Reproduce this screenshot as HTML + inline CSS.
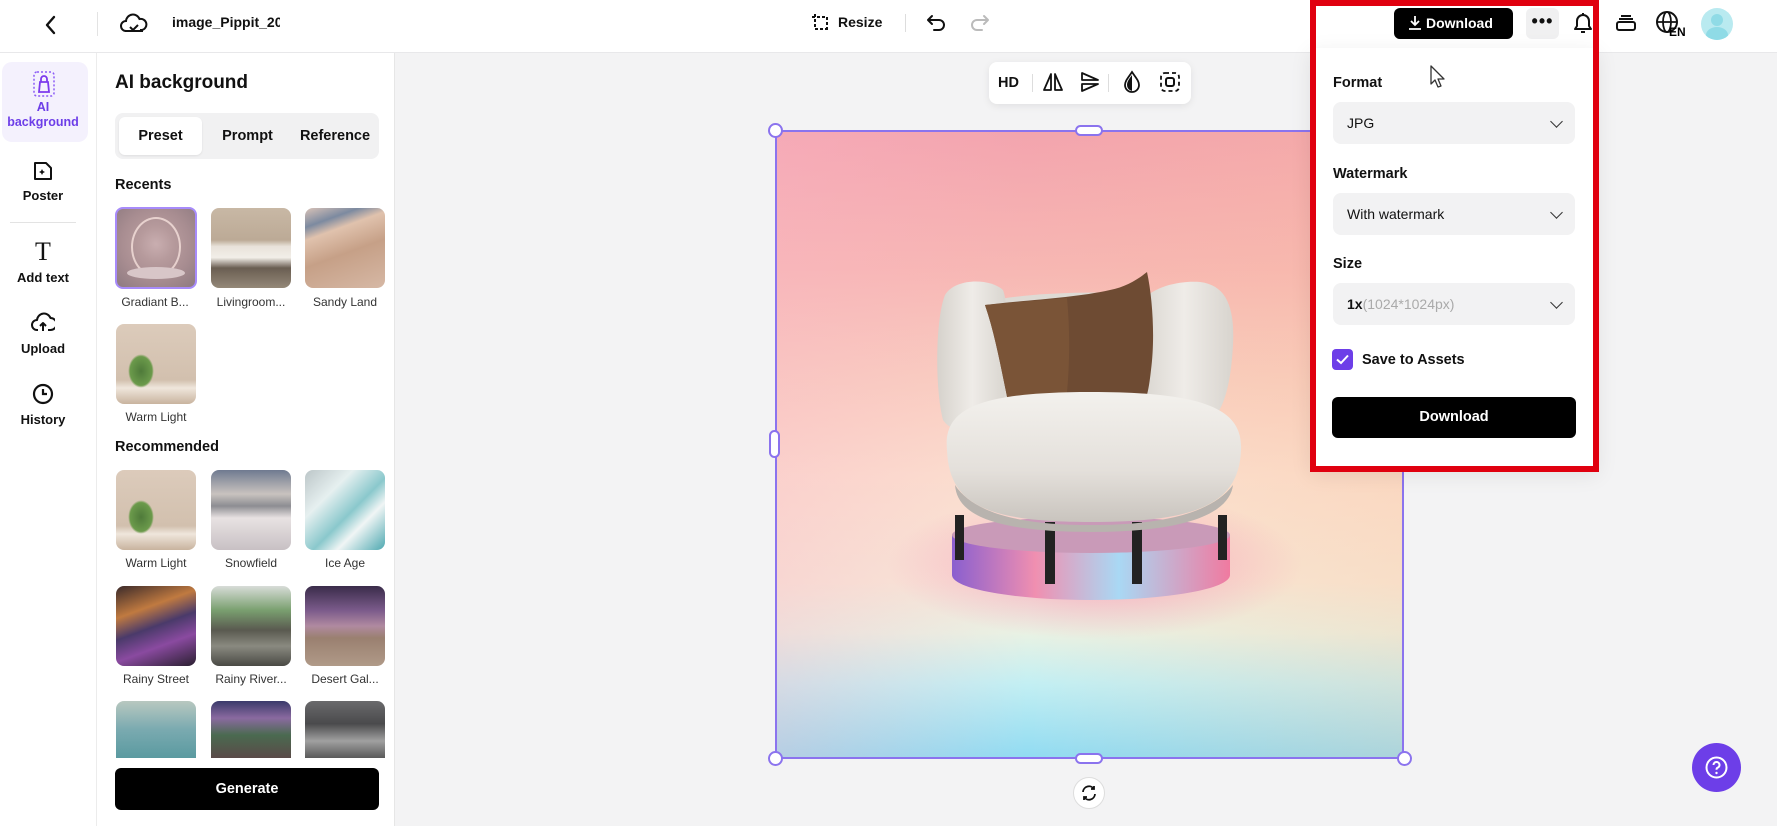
<!DOCTYPE html>
<html><head><meta charset="utf-8"><style>
*{box-sizing:border-box;margin:0;padding:0}
body{width:1777px;height:826px;overflow:hidden;background:#f3f3f4;font-family:"Liberation Sans",sans-serif;color:#111;position:relative}
.abs{position:absolute}
.top{left:0;top:0;width:1777px;height:53px;background:#fff;border-bottom:1px solid #e8e8ea}
.rail{left:0;top:53px;width:97px;height:773px;background:#fff;border-right:1px solid #ececec}
.panel{left:97px;top:53px;width:298px;height:773px;background:#fff;border-right:1px solid #e6e6e6}
.b{font-weight:bold}
.lbl{font-size:13px;font-weight:bold;text-align:center;width:97px;left:0}
.th{width:80px;height:80px;border-radius:8px;overflow:hidden}
.cap{font-size:12px;color:#333;width:96px;text-align:center}
.sel{left:1333px;width:242px;height:42px;background:#f2f2f3;border-radius:8px;font-size:14px;padding:0 14px;line-height:42px}
.chev{position:absolute;right:14px;top:15px;width:9px;height:9px;border-right:1.6px solid #333;border-bottom:1.6px solid #333;transform:rotate(45deg)}
.dl{font-size:14.5px;font-weight:bold}
</style></head><body>
<div class="abs top"></div>
<svg class="abs" style="left:40px;top:12px" width="22" height="26" viewBox="0 0 22 26"><path d="M14 5 L7 13 L14 21" fill="none" stroke="#111" stroke-width="2.4" stroke-linecap="round" stroke-linejoin="round"/></svg>
<div class="abs" style="left:97px;top:12px;width:1px;height:24px;background:#e3e3e3"></div>
<svg class="abs" style="left:120px;top:11px" width="28" height="26" viewBox="0 0 28 26"><path d="M8 20 H6 a5 5 0 0 1 0-10 a7 7 0 0 1 13.5-2 a5.5 5.5 0 0 1 2.5 11 H20" fill="none" stroke="#111" stroke-width="2"/><path d="M10 16 l3 3 l5-5" fill="none" stroke="#111" stroke-width="2"/><path d="M5 20 H23" stroke="#111" stroke-width="2"/></svg>
<div class="abs b" style="left:172px;top:14px;font-size:14px;width:108px;overflow:hidden;white-space:nowrap">image_Pippit_2025</div>
<svg class="abs" style="left:811px;top:13px" width="20" height="20" viewBox="0 0 20 20"><path d="M4 1 V16 H19 M1 4 H16 V19" fill="none" stroke="#111" stroke-width="2" stroke-dasharray="3 2"/></svg>
<div class="abs b" style="left:838px;top:14px;font-size:14px">Resize</div>
<div class="abs" style="left:905px;top:14px;width:1px;height:18px;background:#ddd"></div>
<svg class="abs" style="left:926px;top:12px" width="22" height="22" viewBox="0 0 22 22"><path d="M6 4 L2 8 L6 12 M2 8 H13 a5 5 0 0 1 0 10 H8" fill="none" stroke="#111" stroke-width="2" stroke-linecap="round" stroke-linejoin="round"/></svg>
<svg class="abs" style="left:968px;top:12px" width="22" height="22" viewBox="0 0 22 22"><path d="M16 4 L20 8 L16 12 M20 8 H9 a5 5 0 0 0 0 10 H14" fill="none" stroke="#bbb" stroke-width="2" stroke-linecap="round" stroke-linejoin="round"/></svg>
<div class="abs" style="left:1394px;top:8px;width:119px;height:31px;background:#000;border-radius:6px;color:#fff;font-size:14px;font-weight:bold;line-height:31px;padding-left:32px">Download</div>
<svg class="abs" style="left:1408px;top:15px" width="14" height="16" viewBox="0 0 14 16"><path d="M7 1 V10 M3 6 L7 10 L11 6 M1 14 H13" fill="none" stroke="#fff" stroke-width="1.8"/></svg>
<div class="abs" style="left:1526px;top:8px;width:33px;height:31px;background:#f0f0f1;border-radius:6px;text-align:center;font-size:18px;font-weight:bold;line-height:26px;letter-spacing:1px">•••</div>
<svg class="abs" style="left:1571px;top:10px" width="24" height="26" viewBox="0 0 24 26"><path d="M4 19 H20 L18 16 V11 a6 6 0 0 0-12 0 V16 Z M10 22 h4" fill="none" stroke="#111" stroke-width="2" stroke-linejoin="round"/><path d="M12 3 v2" stroke="#111" stroke-width="2"/></svg>
<svg class="abs" style="left:1614px;top:12px" width="24" height="22" viewBox="0 0 24 22"><rect x="3" y="10" width="18" height="8" rx="2" fill="none" stroke="#111" stroke-width="2"/><path d="M5 7 H19 M7 4 H17" stroke="#111" stroke-width="2"/></svg>
<svg class="abs" style="left:1655px;top:10px" width="32" height="28" viewBox="0 0 32 28"><circle cx="12" cy="12" r="10" fill="none" stroke="#111" stroke-width="2"/><ellipse cx="12" cy="12" rx="4" ry="10" fill="none" stroke="#111" stroke-width="1.8"/><path d="M2 12 H22" stroke="#111" stroke-width="1.8"/><text x="14" y="26" font-size="12" font-weight="bold" font-family="Liberation Sans">EN</text></svg>
<div class="abs" style="left:1701px;top:8px;width:32px;height:32px;border-radius:50%;background:#b9eaf0;overflow:hidden"><div style="position:absolute;left:10px;top:6px;width:12px;height:12px;border-radius:50%;background:#8fdbe6"></div><div style="position:absolute;left:5px;top:19px;width:22px;height:16px;border-radius:50%;background:#8fdbe6"></div></div>

<div class="abs rail"></div>
<div class="abs" style="left:2px;top:62px;width:86px;height:80px;background:#f4f1fd;border-radius:10px"></div>
<svg class="abs" style="left:32px;top:70px" width="24" height="28" viewBox="0 0 24 28"><rect x="2" y="2" width="20" height="24" rx="3" fill="none" stroke="#8b5cf6" stroke-width="1.5" stroke-dasharray="2 2"/><path d="M7 22 L8 12 H16 L17 22 Z M9 12 V9 a3 3 0 0 1 6 0 V12" fill="none" stroke="#7c3aed" stroke-width="1.8"/></svg>
<div class="abs lbl" style="top:100px;color:#6d3ee8;font-size:12.5px;line-height:15px;width:86px">AI<br>background</div>
<svg class="abs" style="left:32px;top:160px" width="22" height="22" viewBox="0 0 22 22"><path d="M3 3 H14 L19 8 V19 H3 Z" fill="none" stroke="#111" stroke-width="2" stroke-linejoin="round"/><path d="M10 9 l1 2 l2 1 l-2 1 l-1 2 l-1-2 l-2-1 l2-1 Z" fill="#111"/></svg>
<div class="abs lbl" style="top:188px;width:86px">Poster</div>
<div class="abs" style="left:10px;top:222px;width:66px;height:1px;background:#e3e3e3"></div>
<div class="abs" style="left:0;width:86px;top:237px;text-align:center;font-family:'Liberation Serif',serif;font-size:26px">T</div>
<div class="abs lbl" style="top:270px;width:86px">Add text</div>
<svg class="abs" style="left:31px;top:312px" width="24" height="22" viewBox="0 0 24 22"><path d="M7 18 H6 a5 5 0 0 1 0-10 a7 7 0 0 1 13.5-2 a5.5 5.5 0 0 1 0 12 H17 M12 19 V11 M9 14 L12 11 L15 14" fill="none" stroke="#111" stroke-width="2" stroke-linejoin="round"/></svg>
<div class="abs lbl" style="top:341px;width:86px">Upload</div>
<svg class="abs" style="left:32px;top:383px" width="22" height="22" viewBox="0 0 22 22"><circle cx="11" cy="11" r="9" fill="none" stroke="#111" stroke-width="2.2"/><path d="M11 6 V11 H15" fill="none" stroke="#111" stroke-width="2.2"/></svg>
<div class="abs lbl" style="top:412px;width:86px">History</div>

<div class="abs panel"></div>
<div class="abs b" style="left:115px;top:72px;font-size:19px">AI background</div>
<div class="abs" style="left:115px;top:113px;width:264px;height:46px;background:#f1f1f2;border-radius:8px"></div>
<div class="abs" style="left:119px;top:117px;width:83px;height:38px;background:#fff;border-radius:6px;box-shadow:0 1px 2px rgba(0,0,0,.08)"></div>
<div class="abs b" style="left:119px;top:128px;width:83px;text-align:center;font-size:14.5px">Preset</div>
<div class="abs b" style="left:206px;top:128px;width:83px;text-align:center;font-size:14.5px">Prompt</div>
<div class="abs b" style="left:292px;top:128px;width:86px;text-align:center;font-size:14.5px">Reference</div>
<div class="abs b" style="left:115px;top:177px;font-size:14.5px">Recents</div>

<div class="abs th" style="left:115px;top:207px;width:82px;height:82px;border:2px solid #a78bfa;background:radial-gradient(circle at 50% 45%,#c9aeb0 0,#b69a9c 30%,#a88d91 60%,#8e7a80 100%)"><div style="position:absolute;left:14px;top:8px;width:50px;height:60px;border:2px solid rgba(255,235,230,.7);border-radius:50%"></div><div style="position:absolute;left:10px;top:58px;width:58px;height:12px;background:#d8c6c8;border-radius:50%"></div></div>
<div class="abs th" style="left:211px;top:208px;background:linear-gradient(#c8b8a5 0,#bcaa96 40%,#e8e2da 48%,#f2eee8 62%,#6a5e52 75%,#948878 100%)"></div>
<div class="abs th" style="left:305px;top:208px;background:linear-gradient(160deg,#d9c3b8 0,#7c8aa0 18%,#e0c2ad 30%,#c6a087 55%,#d6b8a5 100%)"></div>
<div class="abs cap" style="left:107px;top:295px">Gradiant B...</div>
<div class="abs cap" style="left:203px;top:295px">Livingroom...</div>
<div class="abs cap" style="left:297px;top:295px">Sandy Land</div>
<div class="abs th" style="left:116px;top:324px;background:linear-gradient(#dccbbb 0,#d2c0ae 70%,#efe6dc 80%,#c8b39e 100%)"><div style="position:absolute;left:12px;top:30px;width:26px;height:34px;background:radial-gradient(#4f7a3a,#6b9a4b 60%,transparent 70%)"></div></div>
<div class="abs cap" style="left:108px;top:410px">Warm Light</div>

<div class="abs b" style="left:115px;top:439px;font-size:14.5px">Recommended</div>
<div class="abs th" style="left:116px;top:470px;background:linear-gradient(#dccbbb 0,#d2c0ae 70%,#efe6dc 80%,#c8b39e 100%)"><div style="position:absolute;left:12px;top:30px;width:26px;height:34px;background:radial-gradient(#4f7a3a,#6b9a4b 60%,transparent 70%)"></div></div>
<div class="abs th" style="left:211px;top:470px;background:linear-gradient(#6f7a90 0,#c9c3bf 30%,#8d8d92 45%,#e8e2e2 60%,#c8c0c4 100%)"></div>
<div class="abs th" style="left:305px;top:470px;background:linear-gradient(135deg,#bcc6c8 0,#e6f0f0 30%,#8ac8cc 55%,#f0f5f5 70%,#4da8b0 100%)"></div>
<div class="abs cap" style="left:108px;top:556px">Warm Light</div>
<div class="abs cap" style="left:203px;top:556px">Snowfield</div>
<div class="abs cap" style="left:297px;top:556px">Ice Age</div>
<div class="abs th" style="left:116px;top:586px;background:linear-gradient(160deg,#3a2a2a 0,#c07a40 30%,#4a3a6a 50%,#8a4aa0 70%,#2a2030 100%)"></div>
<div class="abs th" style="left:211px;top:586px;background:linear-gradient(#d8dcd8 0,#7aa070 30%,#5a5a50 55%,#8a8a80 75%,#4a4a44 100%)"></div>
<div class="abs th" style="left:305px;top:586px;background:linear-gradient(#3a2c4a 0,#7a5a8a 30%,#b08aa0 50%,#9a8070 65%,#b09a88 100%)"></div>
<div class="abs cap" style="left:108px;top:672px">Rainy Street</div>
<div class="abs cap" style="left:203px;top:672px">Rainy River...</div>
<div class="abs cap" style="left:297px;top:672px">Desert Gal...</div>
<div class="abs th" style="left:116px;top:701px;height:57px;border-radius:8px 8px 0 0;background:linear-gradient(#b8c8c0 0,#7aaab0 50%,#5a9aa0 100%)"></div>
<div class="abs th" style="left:211px;top:701px;height:57px;border-radius:8px 8px 0 0;background:linear-gradient(#3a3a6a 0,#8a6aa0 30%,#4a6a50 60%,#5a4a48 100%)"></div>
<div class="abs th" style="left:305px;top:701px;height:57px;border-radius:8px 8px 0 0;background:linear-gradient(#6a6a6c 0,#4a4a4c 40%,#a0a0a0 70%,#5a5a5a 100%)"></div>
<div class="abs" style="left:115px;top:768px;width:264px;height:42px;background:#000;border-radius:6px;color:#fff;text-align:center;line-height:42px;font-size:14.5px;font-weight:bold">Generate</div>

<div class="abs" style="left:989px;top:62px;width:202px;height:42px;background:#fff;border-radius:8px;box-shadow:0 2px 8px rgba(0,0,0,.08)"></div>
<div class="abs b" style="left:998px;top:75px;font-size:14.5px">HD</div>
<div class="abs" style="left:1032px;top:74px;width:1px;height:18px;background:#ddd"></div>
<svg class="abs" style="left:1041px;top:71px" width="24" height="22" viewBox="0 0 24 22"><path d="M10 3 L3 19 H10 Z M14 3 L21 19 H14 Z" fill="none" stroke="#111" stroke-width="1.8" stroke-linejoin="round"/></svg>
<svg class="abs" style="left:1079px;top:71px" width="22" height="22" viewBox="0 0 22 22"><path d="M3 2 L19 9 H3 Z M3 13 H19 L3 20 Z" fill="none" stroke="#111" stroke-width="1.8" stroke-linejoin="round"/></svg>
<div class="abs" style="left:1108px;top:74px;width:1px;height:18px;background:#ddd"></div>
<svg class="abs" style="left:1121px;top:70px" width="22" height="24" viewBox="0 0 22 24"><path d="M11 2 C7 8 4 11 4 15 a7 7 0 0 0 14 0 C18 11 15 8 11 2 Z" fill="none" stroke="#111" stroke-width="1.8"/><path d="M11 5 V21 a6 6 0 0 1-5-6 C6 11 9 8 11 5Z" fill="#111"/></svg>
<svg class="abs" style="left:1159px;top:71px" width="22" height="22" viewBox="0 0 22 22"><rect x="2" y="2" width="18" height="18" rx="4" fill="none" stroke="#111" stroke-width="1.8" stroke-dasharray="4 3"/><rect x="7" y="7" width="8" height="8" rx="2" fill="none" stroke="#111" stroke-width="2"/></svg>

<div class="abs" style="left:775px;top:130px;width:629px;height:629px;overflow:hidden;background:linear-gradient(180deg,#f3a4ae 0%,#f7b7b3 22%,#f9cfc0 40%,#fbe0cf 55%,#f7e9d8 72%,#e9f2e4 80%,#c3eff3 88%,#90dbf2 100%)">
 <div style="position:absolute;inset:0;background:linear-gradient(90deg,rgba(250,180,200,.35),rgba(255,255,255,0) 40%,rgba(250,190,150,.25))"></div>
 <div style="position:absolute;left:110px;top:360px;width:420px;height:150px;border-radius:50%;background:radial-gradient(ellipse,rgba(245,110,170,.55),rgba(245,140,190,0) 70%)"></div>
 <svg style="position:absolute;left:0;top:0" width="629" height="629" viewBox="0 0 629 629">
  <defs>
   <linearGradient id="ped" x1="0" x2="1"><stop offset="0" stop-color="#8a5fcf"/><stop offset=".3" stop-color="#f08fb0"/><stop offset=".6" stop-color="#a9d8f4"/><stop offset="1" stop-color="#f07aa0"/></linearGradient>
   <linearGradient id="seat" x1="0" y1="0" x2="0" y2="1"><stop offset="0" stop-color="#f3f1ed"/><stop offset=".6" stop-color="#e4e0db"/><stop offset="1" stop-color="#c9c4be"/></linearGradient>
   <linearGradient id="arm" x1="0" y1="0" x2="1" y2="0"><stop offset="0" stop-color="#d6d2cc"/><stop offset=".5" stop-color="#efece8"/><stop offset="1" stop-color="#d8d4ce"/></linearGradient>
  </defs>
  <path d="M177 405 V445 a139 25 0 0 0 278 0 V405 Z" fill="url(#ped)"/>
  <ellipse cx="316" cy="405" rx="139" ry="18" fill="#c99ab8"/>
  <rect x="180" y="385" width="9" height="45" fill="#222"/><rect x="443" y="385" width="9" height="45" fill="#222"/>
  <rect x="270" y="392" width="10" height="62" fill="#222"/><rect x="357" y="392" width="10" height="62" fill="#222"/>
  <path d="M200 175 C240 160 380 158 420 172 L420 270 H200 Z" fill="#dedad4"/>
  <path d="M360 190 C360 160 400 150 425 152 C450 155 460 175 458 215 C456 250 450 285 430 295 L370 290 Z" fill="url(#arm)"/>
  <path d="M170 165 C180 148 215 148 228 160 C236 180 232 270 225 290 C215 305 180 308 168 290 C160 260 160 190 170 165 Z" fill="url(#arm)"/>
  <!-- pillow -->
  <path d="M210 175 C250 170 300 168 335 160 C350 157 362 150 372 142 C378 170 380 210 376 240 C374 258 372 268 368 275 C320 276 270 280 236 285 C228 250 222 210 210 175 Z" fill="#6e4b33"/>
  <path d="M210 175 C240 172 270 170 292 168 C296 210 294 250 290 280 C270 282 252 283 236 285 C228 250 222 210 210 175 Z" fill="#7a5437"/>
  <path d="M172 320 C168 280 200 262 316 262 C432 262 468 280 466 320 C464 375 420 392 316 392 C212 392 174 375 172 320 Z" fill="url(#seat)"/>
  <path d="M180 355 C200 385 250 395 316 395 C382 395 435 385 458 355 C455 380 420 402 316 402 C212 402 182 382 180 355 Z" fill="#b8b3ae"/>
 </svg>
</div>
<div class="abs" style="left:775px;top:130px;width:629px;height:629px;border:2px solid #8b73ee"></div>
<div class="abs" style="left:768px;top:123px;width:15px;height:15px;border-radius:50%;background:#fff;border:2px solid #8b73ee"></div>
<div class="abs" style="left:768px;top:751px;width:15px;height:15px;border-radius:50%;background:#fff;border:2px solid #8b73ee"></div>
<div class="abs" style="left:1397px;top:751px;width:15px;height:15px;border-radius:50%;background:#fff;border:2px solid #8b73ee"></div>
<div class="abs" style="left:1075px;top:125px;width:28px;height:11px;border-radius:6px;background:#fff;border:2px solid #8b73ee"></div>
<div class="abs" style="left:1075px;top:753px;width:28px;height:11px;border-radius:6px;background:#fff;border:2px solid #8b73ee"></div>
<div class="abs" style="left:769px;top:430px;width:11px;height:28px;border-radius:6px;background:#fff;border:2px solid #8b73ee"></div>
<div class="abs" style="left:1073px;top:777px;width:32px;height:32px;border-radius:50%;background:#fff;border:1px solid #ddd"></div>
<svg class="abs" style="left:1080px;top:784px" width="18" height="18" viewBox="0 0 18 18"><path d="M3 8 a6 6 0 0 1 11-3 M15 10 a6 6 0 0 1-11 3 M14 2 V5 H11 M4 16 V13 H7" fill="none" stroke="#111" stroke-width="1.8"/></svg>

<div class="abs" style="left:1692px;top:743px;width:49px;height:49px;border-radius:50%;background:#6d3ee8"></div>
<svg class="abs" style="left:1704px;top:755px" width="25" height="25" viewBox="0 0 25 25"><circle cx="12.5" cy="12.5" r="10" fill="none" stroke="#fff" stroke-width="2"/><path d="M9.5 10 a3 3 0 1 1 4 2.8 c-1 .4-1 1-1 2" fill="none" stroke="#fff" stroke-width="2"/><circle cx="12.5" cy="18" r="1.2" fill="#fff"/></svg>

<div class="abs" style="left:1310px;top:48px;width:288px;height:423px;background:#fff;box-shadow:0 4px 20px rgba(0,0,0,.08)"></div>
<div class="abs dl" style="left:1333px;top:75px">Format</div>
<div class="abs sel" style="top:102px">JPG<div class="chev"></div></div>
<div class="abs dl" style="left:1333px;top:166px">Watermark</div>
<div class="abs sel" style="top:193px">With watermark<div class="chev"></div></div>
<div class="abs dl" style="left:1333px;top:256px">Size</div>
<div class="abs sel" style="top:283px"><b>1x</b><span style="color:#aaa">(1024*1024px)</span><div class="chev"></div></div>
<div class="abs" style="left:1332px;top:349px;width:21px;height:21px;border-radius:4px;background:#6d3ee8"></div>
<svg class="abs" style="left:1335px;top:352px" width="15" height="15" viewBox="0 0 15 15"><path d="M2 7.5 L6 11 L13 3.5" fill="none" stroke="#fff" stroke-width="2"/></svg>
<div class="abs dl" style="left:1362px;top:352px">Save to Assets</div>
<div class="abs" style="left:1332px;top:397px;width:244px;height:41px;background:#000;border-radius:6px;color:#fff;text-align:center;line-height:41px;font-size:14.5px;font-weight:bold">Download</div>
<svg class="abs" style="left:1429px;top:64px" width="18" height="26" viewBox="0 0 18 26"><path d="M2 2 V20 L6 16 L9 23 L12 22 L9 15 H15 Z" fill="#fff" stroke="#333" stroke-width="1.3" stroke-linejoin="round"/></svg>
<div class="abs" style="left:1310px;top:0;width:289px;height:472px;border:6px solid #e0000f"></div>
</body></html>
